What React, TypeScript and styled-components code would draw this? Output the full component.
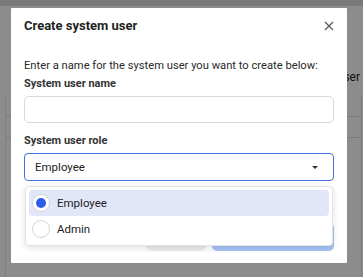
import React from 'react';
import styled, { createGlobalStyle } from 'styled-components';

const GlobalStyle = createGlobalStyle`
  html, body {
    margin: 0;
    padding: 0;
    width: 363px;
    height: 277px;
    overflow: hidden;
    font-family: Roboto, "Liberation Sans", sans-serif;
  }
`;

const Page = styled.div`
  position: relative;
  width: 363px;
  height: 277px;
  background: #ffffff;
  display: flex;
  flex-direction: column;
`;

const TopBar = styled.div`
  height: 6px;
  background: #dcdcdc;
`;

const PageBody = styled.div`
  flex: 1;
  padding: 0 1px 0 5px;
  display: flex;
  flex-direction: column;
`;

const Toolbar = styled.div`
  display: flex;
  justify-content: flex-end;
  padding: 64px 2px 0 0;
  font-size: 12px;
  color: #222;
  height: 20px;
`;

const Card = styled.div`
  flex: 1;
  margin-top: 6px;
  border-left: 1px solid #e6e6e6;
  border-right: 1px solid #e6e6e6;
`;

const TableRow = styled.div`
  height: 20px;
  border-bottom: 1px solid #e2e2e2;
`;

const Backdrop = styled.div`
  position: absolute;
  inset: 0;
  background: rgba(0, 0, 0, 0.45);
`;

const Modal = styled.div`
  position: absolute;
  left: 11px;
  top: 8px;
  width: 336px;
  height: 255px;
  box-sizing: border-box;
  background: #fff;
  border-radius: 1px;
  padding: 9px 13px 12px;
  display: flex;
  flex-direction: column;
`;

const Header = styled.div`
  display: flex;
  align-items: center;
  justify-content: space-between;
  height: 18px;
`;

const Title = styled.h2`
  margin: 0;
  font-size: 13px;
  line-height: 18px;
  font-weight: 700;
  color: #1f1f1f;
`;

const CloseButton = styled.button`
  border: 0;
  background: none;
  padding: 0;
  width: 12px;
  height: 12px;
  margin-right: -1px;
  display: flex;
  align-items: center;
  justify-content: center;
  color: #5a5a5a;
`;

const Intro = styled.p`
  margin: 24px 0 0;
  font-size: 11.2px;
  line-height: 14px;
  color: #2a2a2a;
`;

const Label = styled.label<{ $gap: number }>`
  display: block;
  margin-top: ${({ $gap }) => $gap}px;
  font-size: 11px;
  line-height: 14px;
  font-weight: 700;
  color: #333;
`;

const TextField = styled.input`
  box-sizing: border-box;
  margin-top: 5px;
  width: 100%;
  height: 27px;
  border: 1px solid #d9d9d9;
  border-radius: 5px;
  background: #fff;
  outline: none;
`;

const SelectWrap = styled.div`
  position: relative;
  margin-top: 5px;
`;

const SelectBox = styled.div`
  box-sizing: border-box;
  height: 28px;
  border: 1px solid #4471e0;
  border-radius: 4px;
  display: flex;
  align-items: center;
  justify-content: space-between;
  padding: 0 15px 0 10px;
  font-size: 11.5px;
  color: #222;
`;

const Caret = styled.span`
  width: 0;
  height: 0;
  border-left: 3px solid transparent;
  border-right: 3px solid transparent;
  border-top: 3px solid #333;
`;

const Menu = styled.ul`
  position: absolute;
  top: calc(100% + 5px);
  left: 1px;
  right: 1px;
  margin: 0;
  padding: 3px;
  list-style: none;
  background: #fff;
  border: 1px solid #e3e3e3;
  border-radius: 4px;
  box-shadow: 0 2px 6px rgba(0, 0, 0, 0.12);
  z-index: 2;
`;

const Option = styled.li<{ $active?: boolean }>`
  height: 26px;
  display: flex;
  align-items: center;
  gap: 7px;
  padding: 0 3px;
  border-radius: 4px;
  font-size: 11.5px;
  color: #222;
  background: ${({ $active }) => ($active ? '#e1e7f8' : 'transparent')};
`;

const Radio = styled.span<{ $checked?: boolean }>`
  box-sizing: border-box;
  width: 18px;
  height: 18px;
  border-radius: 50%;
  border: 1px solid #d4d4d4;
  background: #fff;
  display: flex;
  align-items: center;
  justify-content: center;
  &::after {
    content: '';
    width: 10px;
    height: 10px;
    border-radius: 50%;
    background: ${({ $checked }) => ($checked ? '#2a5ee8' : 'transparent')};
  }
`;

const Footer = styled.div`
  margin-top: auto;
  display: flex;
  justify-content: flex-end;
  gap: 6px;
`;

const Button = styled.button<{ $primary?: boolean }>`
  height: 28px;
  border: 0;
  border-radius: 5px;
  font-family: inherit;
  font-size: 12px;
  width: ${({ $primary }) => ($primary ? 122 : 60)}px;
  background: ${({ $primary }) => ($primary ? '#a6c3f6' : '#ececec')};
  color: ${({ $primary }) => ($primary ? '#fff' : '#333')};
`;

const CloseIcon = () => (
  <svg width="10" height="10" viewBox="0 0 10 10" fill="none" stroke="currentColor" strokeWidth="1.3">
    <path d="M1 1L9 9M9 1L1 9" />
  </svg>
);

export default function App() {
  return (
    <>
      <GlobalStyle />
      <Page>
        <TopBar />
        <PageBody>
          <Toolbar>Create system user</Toolbar>
          <Card>
            <TableRow />
            <TableRow />
          </Card>
        </PageBody>
        <Backdrop />
        <Modal>
          <Header>
            <Title>Create system user</Title>
            <CloseButton aria-label="Close">
              <CloseIcon />
            </CloseButton>
          </Header>
          <Intro>Enter a name for the system user you want to create below:</Intro>
          <Label $gap={4}>System user name</Label>
          <TextField />
          <Label $gap={11}>System user role</Label>
          <SelectWrap>
            <SelectBox>
              <span>Employee</span>
              <Caret />
            </SelectBox>
            <Menu>
              <Option $active>
                <Radio $checked />
                Employee
              </Option>
              <Option>
                <Radio />
                Admin
              </Option>
            </Menu>
          </SelectWrap>
          <Footer>
            <Button>Cancel</Button>
            <Button $primary>Create</Button>
          </Footer>
        </Modal>
      </Page>
    </>
  );
}
